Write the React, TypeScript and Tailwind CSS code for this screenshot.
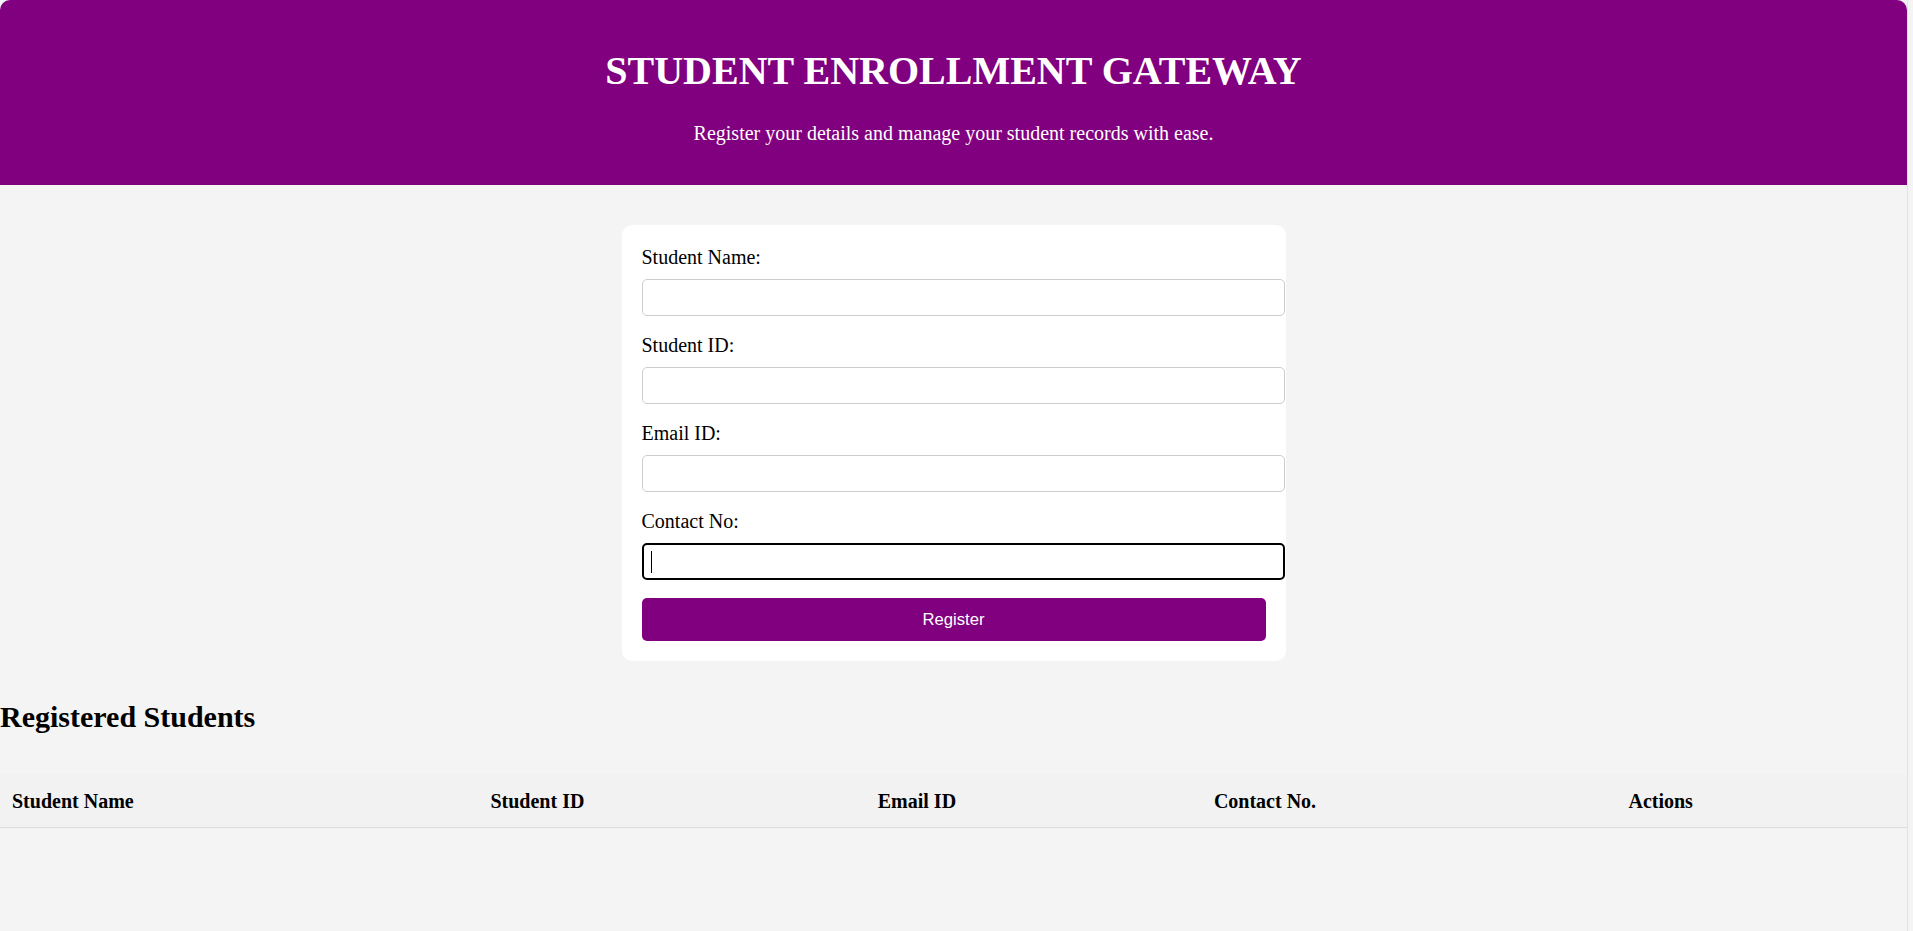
import { useState } from "react";

type Field = {
  id: string;
  label: string;
  type: string;
};

const fields: Field[] = [
  { id: "name", label: "Student Name:", type: "text" },
  { id: "studentId", label: "Student ID:", type: "text" },
  { id: "email", label: "Email ID:", type: "email" },
  { id: "contact", label: "Contact No:", type: "tel" }
];

const columns = ["Student Name", "Student ID", "Email ID", "Contact No.", "Actions"];

const inputClass =
  "block h-[37px] w-[calc(100%+19px)] rounded-[5px] border bg-white px-[10px] text-[17px] caret-transparent outline-none";

export default function App() {
  const [values, setValues] = useState<Record<string, string>>({});

  return (
    <div className="flex min-h-screen bg-[#f4f4f4] font-['Liberation_Serif',serif] text-black">
      <div className="w-[1908px] shrink-0 border-r border-[#e2e2e2]">
        <header className="rounded-t-[10px] bg-[#800080] pt-[48px] pb-[40px] text-center text-white">
          <h1 className="text-[40px] font-bold leading-[46px]">STUDENT ENROLLMENT GATEWAY</h1>
          <p className="mt-[28px] text-[20px] leading-[23px]">
            Register your details and manage your student records with ease.
          </p>
        </header>

        <form
          className="mx-auto mt-[40px] w-[664px] rounded-[10px] bg-white px-[20px] pt-[21px] pb-[20px]"
          onSubmit={(event) => event.preventDefault()}
        >
          {fields.map((field) => {
            const focused = field.id === "contact";
            return (
              <div className="mb-[18px]" key={field.id}>
                <label className="block text-[20px] leading-[23px]" htmlFor={field.id}>
                  {field.label}
                </label>
                <div className="relative mt-[10px]">
                  <input
                    className={`${inputClass} ${
                      focused ? "border-2 border-black" : "border-[#cccccc]"
                    }`}
                    id={field.id}
                    type={field.type}
                    value={values[field.id] ?? ""}
                    onChange={(event) =>
                      setValues({ ...values, [field.id]: event.target.value })
                    }
                  />
                  {focused ? (
                    <span className="absolute top-[8px] left-[9px] h-[22px] w-px bg-black" />
                  ) : null}
                </div>
              </div>
            );
          })}
          <button
            className="block h-[43px] w-full rounded-[5px] bg-[#800080] font-['Liberation_Sans',Arial,sans-serif] text-[16.67px] text-white"
            type="submit"
          >
            Register
          </button>
        </form>

        <h2 className="mt-[39px] text-[30px] font-bold leading-[34px]">Registered Students</h2>

        <table className="mt-[40px] w-full border-collapse">
          <thead>
            <tr className="border-b border-[#dddddd] bg-[#f2f2f2]">
              {columns.map((column) => (
                <th
                  className="px-[12px] pt-[16px] pb-[14px] text-left text-[20px] font-bold leading-[23px]"
                  key={column}
                >
                  {column}
                </th>
              ))}
            </tr>
          </thead>
          <tbody />
        </table>
      </div>
    </div>
  );
}
